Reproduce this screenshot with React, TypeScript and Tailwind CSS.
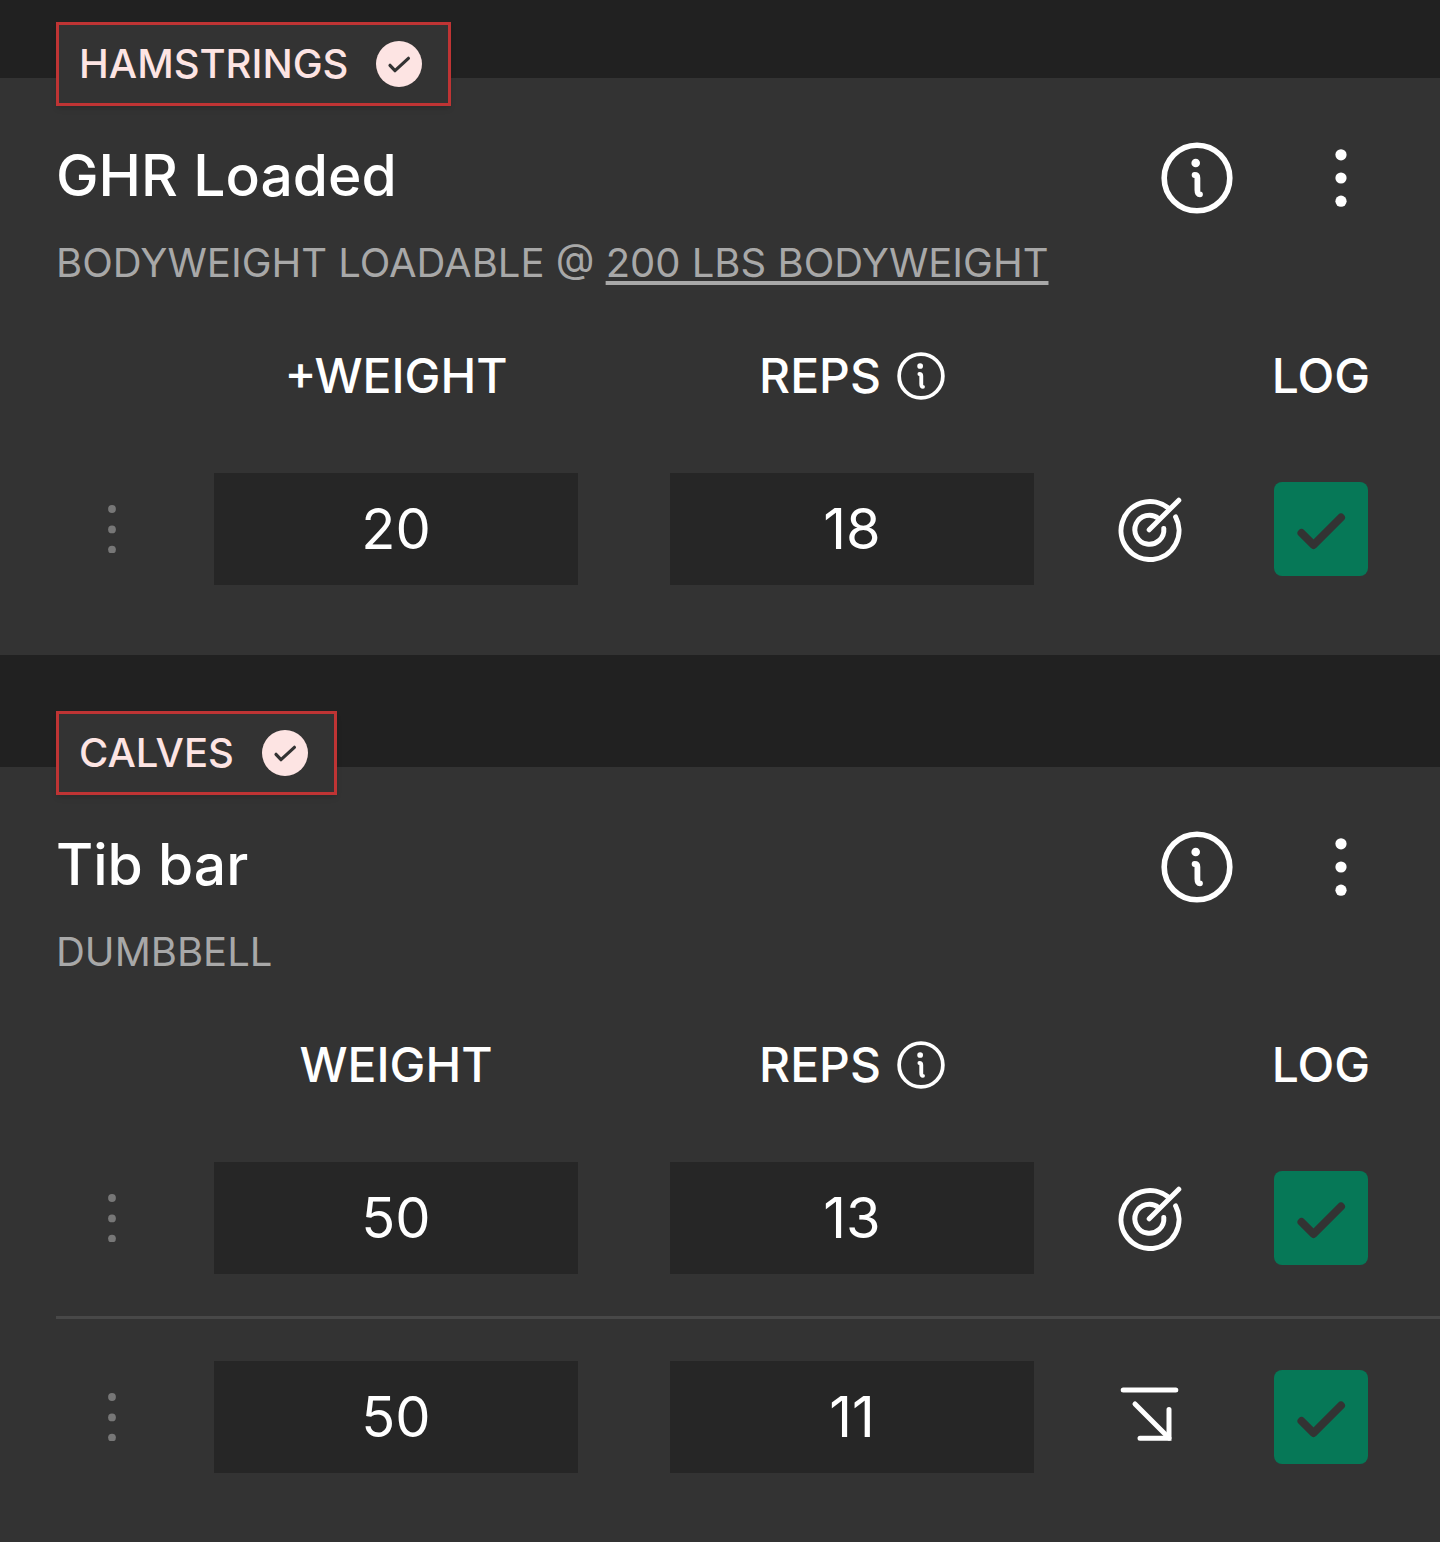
import React, { useState } from 'react';

type Marker = 'target' | 'drop';

interface WorkoutSet {
  id: number;
  weight: string;
  reps: string;
  marker: Marker;
}

interface Exercise {
  muscle: string;
  name: string;
  equipment: string;
  bodyweight?: string;
  weightLabel: string;
  sets: WorkoutSet[];
}

const exercises: Exercise[] = [
  {
    muscle: 'HAMSTRINGS',
    name: 'GHR Loaded',
    equipment: 'BODYWEIGHT LOADABLE',
    bodyweight: '200 LBS BODYWEIGHT',
    weightLabel: '+WEIGHT',
    sets: [{ id: 1, weight: '20', reps: '18', marker: 'target' }],
  },
  {
    muscle: 'CALVES',
    name: 'Tib bar',
    equipment: 'DUMBBELL',
    weightLabel: 'WEIGHT',
    sets: [
      { id: 1, weight: '50', reps: '13', marker: 'target' },
      { id: 2, weight: '50', reps: '11', marker: 'drop' },
    ],
  },
];

const InfoIcon = ({ className }: { className: string }) => (
  <svg viewBox="0 0 72 72" fill="none" stroke="currentColor" strokeLinecap="round" className={className}>
    <circle cx="36" cy="36" r="32.8" strokeWidth="5.6" />
    <circle cx="34.7" cy="21" r="4.3" fill="currentColor" stroke="none" />
    <path d="M33.6 33C35.8 33 36.4 34 36.4 36V48C36.4 51 37 52.3 39 52.3" strokeWidth="5.8" />
  </svg>
);

const DotsIcon = ({ className }: { className: string }) => (
  <svg viewBox="0 0 72 72" fill="currentColor" className={className}>
    <circle cx="36" cy="12.8" r="5.6" />
    <circle cx="36" cy="36" r="5.6" />
    <circle cx="36" cy="59.2" r="5.6" />
  </svg>
);

const GripIcon = () => (
  <svg viewBox="0 0 48 48" fill="currentColor" className="size-12">
    <circle cx="24" cy="4" r="3.9" />
    <circle cx="24" cy="24.4" r="3.9" />
    <circle cx="24" cy="44.6" r="3.9" />
  </svg>
);

const TargetIcon = () => (
  <svg viewBox="0 0 66 66" fill="none" stroke="currentColor" strokeWidth="5" strokeLinecap="round" className="size-[66px]">
    <path d="M52 11.8A29 29 0 1 0 59.6 20.9" />
    <path d="M42.4 22.4A14.5 14.5 0 1 0 47.8 32.4" />
    <path d="M33.2 33.8L62.8 4.2" />
  </svg>
);

const DropIcon = () => (
  <svg viewBox="0 0 66 66" fill="none" stroke="currentColor" strokeWidth="5" strokeLinecap="round" className="size-[66px]">
    <path d="M7.2 6H59.8" />
    <path d="M19 20L53 54" />
    <path d="M53 25.5V54.3H24" />
  </svg>
);

const MuscleTag = ({ label }: { label: string }) => (
  <div className="-mt-14 ml-14 flex h-[84px] w-fit items-center gap-7 border-[3px] border-[#bf3434] bg-[#333333] pr-[26px] pl-5 text-[#fde4e3] shadow-md">
    <span className="text-[40px] leading-none font-medium">{label}</span>
    <svg viewBox="0 0 46 46" className="size-[46px]">
      <circle cx="23" cy="23" r="23" fill="currentColor" />
      <path d="M14 24.3L19 29.7L32.4 17.3" fill="none" stroke="#333333" strokeWidth="3.2" strokeLinecap="round" strokeLinejoin="round" />
    </svg>
  </div>
);

const SetRow = ({ set, divided }: { set: WorkoutSet; divided: boolean }) => {
  const [weight, setWeight] = useState(set.weight);
  const [reps, setReps] = useState(set.reps);
  const [logged, setLogged] = useState(true);

  const border = divided ? 'border-t-[3px] border-[#484848]' : '';
  const field = 'block h-28 w-full bg-[#262626] text-center text-[56px] text-white outline-none';

  return (
    <tr>
      <td className={`p-0 ${border}`}>
        <button aria-label="Set options" className="mx-auto block text-[#777777]">
          <GripIcon />
        </button>
      </td>
      <td className={`px-[46px] py-[42px] ${border}`}>
        <input aria-label="Weight" value={weight} onChange={(e) => setWeight(e.target.value)} className={field} />
      </td>
      <td className={`px-[46px] py-[42px] ${border}`}>
        <input aria-label="Reps" value={reps} onChange={(e) => setReps(e.target.value)} className={field} />
      </td>
      <td className={`p-0 ${border}`}>
        <button aria-label="Set type" className="mx-auto block">
          {set.marker === 'target' ? <TargetIcon /> : <DropIcon />}
        </button>
      </td>
      <td className={`p-0 pl-14 ${border}`}>
        <label className="grid size-[94px]">
          <input
            type="checkbox"
            aria-label="Log set"
            checked={logged}
            onChange={(e) => setLogged(e.target.checked)}
            className="col-start-1 row-start-1 size-full appearance-none rounded-lg bg-[#262626] checked:bg-[#067857]"
          />
          {logged && (
            <svg viewBox="0 0 94 94" fill="none" className="pointer-events-none col-start-1 row-start-1 size-full">
              <path d="M27.5 51L39.5 63L67 35.5" stroke="#333333" strokeWidth="8" strokeLinecap="round" strokeLinejoin="round" />
            </svg>
          )}
        </label>
      </td>
    </tr>
  );
};

const ExerciseCard = ({ exercise }: { exercise: Exercise }) => (
  <section className="bg-[#333333] pb-7 last:grow last:pb-0">
    <MuscleTag label={exercise.muscle} />

    <div className="mt-9 flex items-start justify-between pr-[63px] pl-14">
      <h2 className="text-[57px] leading-[68px] font-medium">{exercise.name}</h2>
      <div className="flex gap-[72px]">
        <button aria-label="Exercise info">
          <InfoIcon className="size-[72px]" />
        </button>
        <button aria-label="Exercise options">
          <DotsIcon className="size-[72px]" />
        </button>
      </div>
    </div>

    <p className="mt-4 pl-14 text-[40px] leading-[66px] text-[#a8a8a8]">
      {exercise.equipment}
      {exercise.bodyweight && (
        <>
          {' @ '}
          <a href="#bodyweight" className="underline decoration-4 underline-offset-4">
            {exercise.bodyweight}
          </a>
        </>
      )}
    </p>

    <div className="mt-6 pl-14">
      <table className="w-full table-fixed border-separate border-spacing-0">
        <colgroup>
          <col className="w-28" />
          <col />
          <col />
          <col className="w-[138px]" />
          <col className="w-[222px]" />
        </colgroup>
        <thead>
          <tr className="h-[111px] text-[48px] leading-none">
            <td className="p-0" />
            <th className="p-0 font-medium">{exercise.weightLabel}</th>
            <th className="p-0 font-medium">
              <div className="flex items-center justify-center gap-4">
                REPS
                <button aria-label="Reps info">
                  <InfoIcon className="size-12" />
                </button>
              </div>
            </th>
            <td className="p-0" />
            <th className="p-0 pr-[72px] pl-14 font-medium">
              <div className="flex justify-center">LOG</div>
            </th>
          </tr>
        </thead>
        <tbody>
          {exercise.sets.map((set, i) => (
            <SetRow key={set.id} set={set} divided={i > 0} />
          ))}
        </tbody>
      </table>
    </div>
  </section>
);

export default function App() {
  return (
    <main className="flex min-h-screen flex-col gap-28 bg-[#212121] pt-[78px] font-['Inter',sans-serif] text-white">
      {exercises.map((exercise) => (
        <ExerciseCard key={exercise.name} exercise={exercise} />
      ))}
    </main>
  );
}
